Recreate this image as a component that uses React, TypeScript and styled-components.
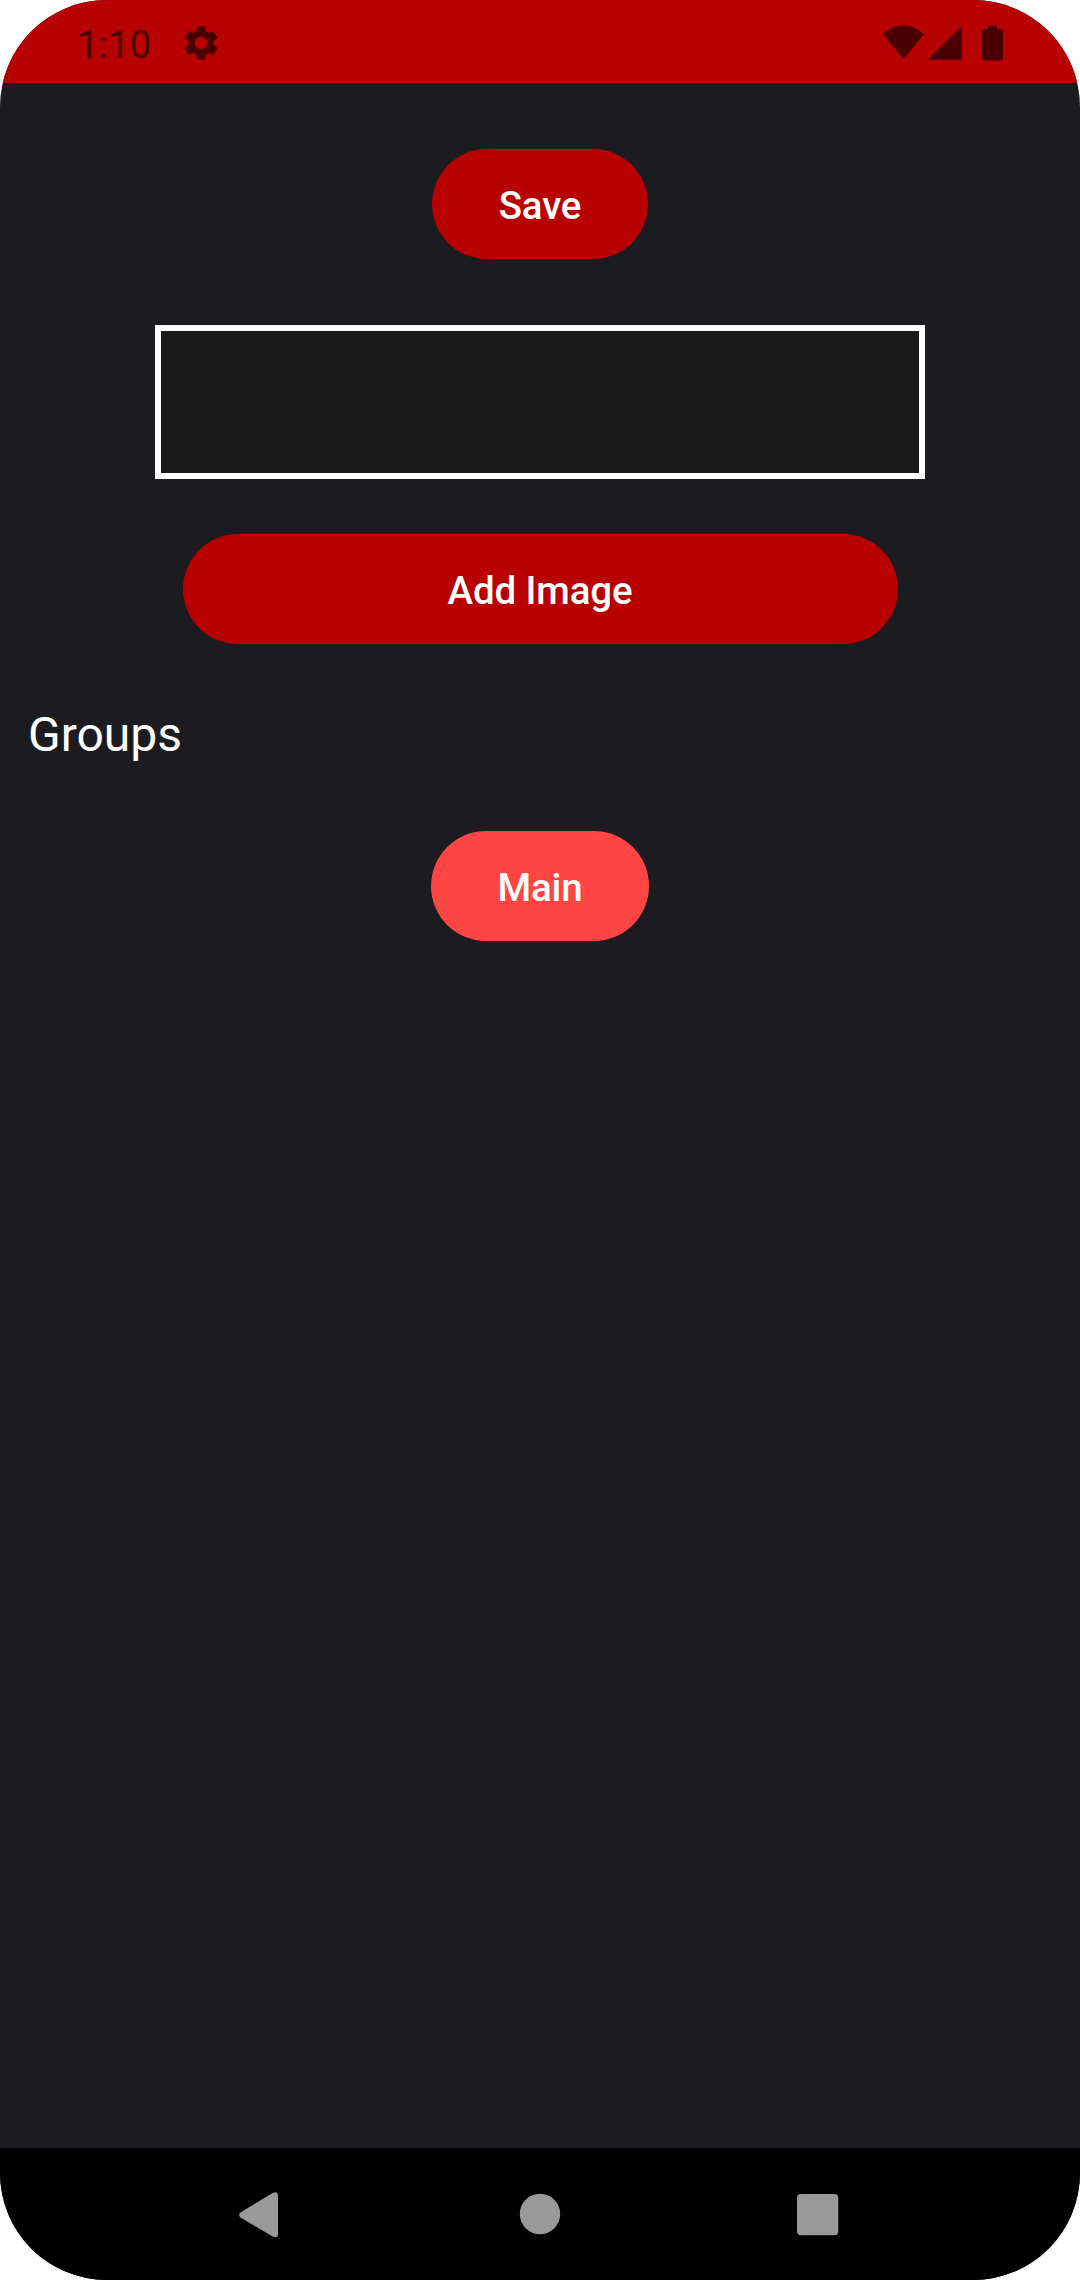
import React from "react";
import styled, { createGlobalStyle } from "styled-components";
import { MdSettings } from "react-icons/md";

const GlobalStyle = createGlobalStyle`
  *, *::before, *::after { box-sizing: border-box; }
  body { margin: 0; background: #ffffff; }
`;

const Screen = styled.div`
  display: flex;
  flex-direction: column;
  width: 1080px;
  height: 2280px;
  overflow: hidden;
  border-radius: 107px;
  background: #1c1b1f;
  color: #ffffff;
  font-family: Roboto, "Noto Sans", sans-serif;
`;

const StatusBar = styled.header`
  display: flex;
  align-items: center;
  justify-content: space-between;
  height: 83px;
  padding: 3px 77px 0;
  background: #b80000;
  color: #4a0000;
`;

const StatusGroup = styled.div`
  display: flex;
  align-items: center;

  svg { display: block; }
`;

const Clock = styled.span`
  margin: 4px 29px 0 0;
  font-size: 38.5px;
  line-height: 46px;
`;

const Content = styled.main`
  flex: 1;
  display: flex;
  flex-direction: column;
  align-items: center;
  padding-top: 66px;
`;

const PillButton = styled.button<{ $width: number; $selected?: boolean }>`
  width: ${({ $width }) => $width}px;
  height: 110px;
  padding: 2px 0 0;
  border: 0;
  border-radius: 55px;
  background: ${({ $selected }) => ($selected ? "#ff4444" : "#b80000")};
  color: inherit;
  font-family: inherit;
  font-size: 38.5px;
  font-weight: 500;
  line-height: 45px;
  letter-spacing: -0.15px;
`;

const NameField = styled.input`
  width: 770px;
  height: 154px;
  margin: 66px 0 55px;
  padding: 0 24px;
  border: 6px solid #ffffff;
  border-radius: 0;
  outline: 0;
  background: #1a1a1a;
  color: inherit;
  font: 400 44px Roboto, sans-serif;
`;

const SectionTitle = styled.h2`
  align-self: stretch;
  margin: 62px 0 68px;
  padding-left: 28px;
  font-size: 48px;
  font-weight: 400;
  line-height: 57px;
`;

const NavBar = styled.nav`
  display: flex;
  align-items: center;
  justify-content: center;
  gap: 212px;
  height: 132px;
  background: #000000;
`;

const NavButton = styled.button`
  width: 66px;
  height: 66px;
  padding: 0;
  border: 0;
  background: none;
  color: #999999;

  svg { display: block; }
`;

const WifiIcon = styled.svg`
  margin-right: 2px;
`;

const SignalIcon = () => (
  <svg width="36" height="36" viewBox="0 0 36 36" fill="currentColor">
    <path d="M0.700 34.700 34.700 1V34.700z" />
  </svg>
);

const BatteryIcon = styled.svg`
  margin-left: 19px;
`;

export default function App() {
  return (
    <>
      <GlobalStyle />
      <Screen>
        <StatusBar>
          <StatusGroup>
            <Clock>1:10</Clock>
            <MdSettings size={42} />
          </StatusGroup>
          <StatusGroup>
            <WifiIcon width="42" height="36" viewBox="0 0 42 36" fill="currentColor">
              <path d="M20.500 34.300 0.300 9.500C5.500 3.900 12.500 0.500 20.500 0.500s15 3.400 20.200 9z" />
            </WifiIcon>
            <SignalIcon />
            <BatteryIcon width="21" height="36" viewBox="0 0 21 36" fill="currentColor">
              <path d="M6 0.500h9V4h3.500A2.500 2.500 0 0 1 21 6.500v26.500a2.500 2.500 0 0 1-2.500 2.500h-16A2.500 2.500 0 0 1 0 33V6.500A2.500 2.500 0 0 1 2.500 4H6z" />
            </BatteryIcon>
          </StatusGroup>
        </StatusBar>
        <Content>
          <PillButton $width={216}>Save</PillButton>
          <NameField type="text" aria-label="Name" />
          <PillButton $width={715}>Add Image</PillButton>
          <SectionTitle>Groups</SectionTitle>
          <PillButton $width={218} $selected>Main</PillButton>
        </Content>
        <NavBar>
          <NavButton aria-label="Back">
            <svg width="66" height="66" viewBox="0 0 66 66" fill="currentColor">
              <path d="M11.400 31.600 43.600 12Q49 9.700 49 15V53Q49 58 43.600 55.500L11.400 36.400Q8.800 34 11.400 31.600z" />
            </svg>
          </NavButton>
          <NavButton aria-label="Home">
            <svg width="66" height="66" viewBox="0 0 66 66" fill="currentColor">
              <circle cx="33" cy="33" r="20.200" />
            </svg>
          </NavButton>
          <NavButton aria-label="Recents">
            <svg width="66" height="66" viewBox="0 0 66 66" fill="currentColor">
              <rect x="12" y="13" width="41.300" height="41.300" rx="4" />
            </svg>
          </NavButton>
        </NavBar>
      </Screen>
    </>
  );
}
